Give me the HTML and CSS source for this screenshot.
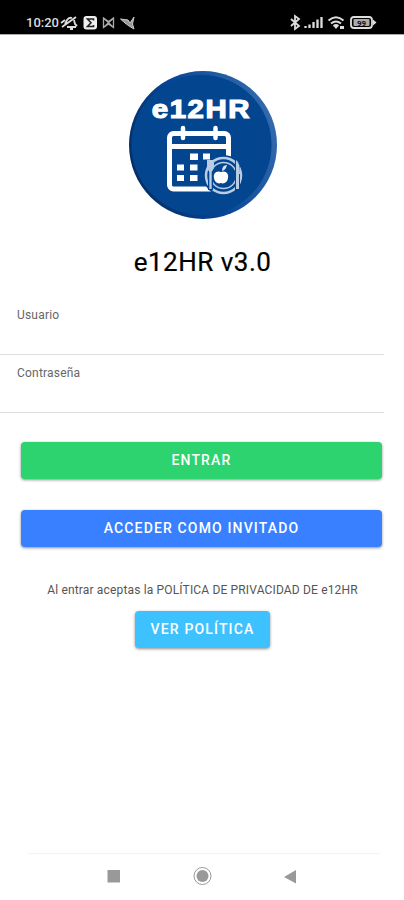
FILE: index.html
```html
<!DOCTYPE html>
<html lang="es">
	<head>
		<meta charset="utf-8">
		<meta name="viewport" content="width=device-width, initial-scale=1.0">
		<title>e12HR</title>
		<link rel="stylesheet" href="styles.css">
	</head>
	<body>
		<header class="status">
			<span class="time">10:20</span>
			<svg class="left-icons" width="76" height="18" viewBox="60 14 76 18">
				<!-- muted bell -->
				<g fill="none" stroke="#ddd" stroke-width="1.8">
					<path d="M65 24l2-4q2-3 5-2M74 20l1 4 2 2M67 27h9M70 29h3M61 23l4-3M62 27L76 17"/>
				</g>
				<rect x="83.500" y="16" width="13.500" height="13.500" rx="3" fill="#eee"/>
				<path d="M93.500 20.500v-1.500h-6l3.500 3.700-3.500 3.800h6V25" fill="none" stroke="#222" stroke-width="1.600"/>
				<path d="M103.500 18v9.500l5-3.500 5 3.500V18l-5 3.500zM103.500 18l10 9.500M113.500 18l-10 9.500" fill="none" stroke="#aaa" stroke-width="1.300"/>
				<path d="M120.500 19l7.500 1 2 3 4-6-1.500 7 1.500 5-5-3-4-3z" fill="#999" stroke="#ccc"/>
			</svg>
			<svg class="right-icons" width="88" height="18" viewBox="289 14 88 18">
				<path d="M291 19l8 7-4 3V16l4 3-8 7" fill="none" stroke="#ddd" stroke-width="1.800"/>
				<path d="M305.500 28v-2M309.500 28v-3.500M313.500 28v-6M317.500 28v-8.500M321.500 28V17" stroke="#ddd" stroke-width="2.300"/>
				<g fill="none" stroke="#ddd" stroke-width="2">
					<path d="M328.500 20.500q7.500-6.500 15 0M331 23.500q5-4 10 0M333.500 26q2.500-2 5 0"/>
				</g>
				<path d="M333.500 26l2.500 3 2.500-3zM340 26h4v3h-4z" fill="#ddd"/>
				<rect x="351" y="17" width="21" height="11" rx="3" fill="none" stroke="#ddd" stroke-width="1.800"/>
				<rect x="353.500" y="19" width="16" height="7" rx="1" fill="#aaa"/>
				<path d="M373 19.500l3.500 3-3.500 3z" fill="#ddd"/>
				<text x="361.500" y="25.500" class="battery">99</text>
			</svg>
		</header>

		<main class="login">
			<svg class="logo" width="150" height="150" viewBox="0 0 150 150">
				<defs>
					<linearGradient id="rim" x1="0" y1=".7" x2="1" y2=".3">
						<stop offset="0" stop-color="#062c62"/>
						<stop offset=".45" stop-color="#064596"/>
						<stop offset="1" stop-color="#356cad"/>
					</linearGradient>
				</defs>
				<circle cx="75" cy="75" r="74" fill="url(#rim)"/>
				<circle cx="73.500" cy="75" r="70" fill="#03458f"/>
				<text x="20.500" y="48" class="logo-text" transform="translate(1) scale(1.11 1)">e12HR</text>
				<!-- calendar -->
				<rect x="41.500" y="63.500" width="59" height="55.500" rx="4" fill="none" stroke="#fff" stroke-width="5"/>
				<path d="M42 76.500h58" stroke="#fff" stroke-width="5"/>
				<path d="M55 58v10M87.500 58v10" stroke="#fff" stroke-width="4.500" stroke-linecap="round"/>
				<path d="M62 83.500h8v6.500h-8zM75 83.500h7v6h-7zM49 94.500h7v6h-7zM62 94.500h7.500v6H62zM49 105h7v6h-7zM62 105h7.500v6H62z" fill="#fff"/>
				<!-- plate -->
				<circle cx="95.500" cy="105.500" r="20.500" fill="#03458f"/>
				<circle cx="95.500" cy="105.500" r="17.500" fill="none" stroke="#b8cce4" stroke-width="2.500"/>
				<circle cx="95.500" cy="105.500" r="13" fill="none" stroke="#b8cce4" stroke-width="1.500"/>
				<path d="M93 102c-5-2-8 2-7 6 .5 4 4 6.500 7 5 3 1.500 6.500-1 7-5 1-4-2-8-7-6z" fill="#fff"/>
				<path d="M94 101q0-6 5-6-1 5-5 6z" fill="#d8e6f5"/>
				<!-- fork and knife -->
				<path d="M82.500 90v30M109.500 90v30" stroke="#03458f" stroke-width="5"/>
				<path d="M79 90h7v8l-2.300 4v17h-2.400v-17L79 98zM108 90q4 2 4 14h-1v15h-3z" fill="#b8cce4"/>
			</svg>

			<h1>e12HR v3.0</h1>

			<form class="form">
				<label class="field"><span>Usuario</span><input type="text"></label>
				<label class="field"><span>Contraseña</span><input type="password"></label>
				<button type="button" class="btn success">ENTRAR</button>
				<button type="button" class="btn primary">ACCEDER COMO INVITADO</button>
			</form>
			<p class="policy">Al entrar aceptas la POLÍTICA DE PRIVACIDAD DE e12HR</p>
			<button type="button" class="btn info">VER POLÍTICA</button>
		</main>

		<footer class="navbar">
			<svg width="404" height="46" viewBox="0 0 404 46">
				<path d="M107.500 16h12.500v12.500h-12.500zM296 16v13.500l-12-6.500z" fill="#999"/>
				<circle cx="202.500" cy="22" r="8.500" fill="none" stroke="#999"/>
				<circle cx="202.500" cy="22" r="6" fill="#999"/>
			</svg>
		</footer>
	</body>
</html>
```

FILE: styles.css
```css
* {
	box-sizing: border-box;
}

body {
	margin: 0;
	height: 900px;
	display: flex;
	flex-direction: column;
	background: #fff;
	font-family: Roboto, sans-serif;
	color: #000;
}

.status {
	height: 34px;
	padding: 14px 27px 0 26px;
	display: flex;
	background: #000;
	box-shadow: 0 1px #aaa;
}

.time {
	width: 34px;
	font-size: 13px;
	line-height: 18px;
	font-weight: 500;
	color: #ddd;
	white-space: nowrap;
}

.right-icons {
	margin-left: auto;
}

.battery {
	font-size: 8px;
	font-weight: 700;
	text-anchor: middle;
	fill: #111;
}

.login {
	flex: 1;
	display: flex;
	flex-direction: column;
	align-items: center;
	padding-top: 36px;
}

.logo {
	margin-left: 2px;
}

.logo-text {
	font-family: "Liberation Sans", sans-serif;
	font-size: 26.5px;
	font-weight: 700;
	letter-spacing: 1.4px;
	fill: #fff;
	stroke: #fff;
	stroke-width: 1.2px;
}

h1 {
	margin: 26px 0 0 1px;
	font-size: 26px;
	line-height: 32px;
	font-weight: 400;
	letter-spacing: 0.5px;
	-webkit-text-stroke: 0.2px #000;
}

.form {
	width: 100%;
	padding: 19px 20px 0 0;
}

.field {
	display: block;
	height: 58px;
	padding: 11px 17px 0;
	border-bottom: 1px solid #ddd;
	font-size: 12px;
	line-height: 14px;
	letter-spacing: 0.2px;
	color: #666;
}

.field span {
	display: block;
}

.field input {
	display: block;
	width: 100%;
	height: 30px;
	border: 0;
	outline: 0;
	background: none;
}

.btn {
	display: block;
	height: 37px;
	padding: 0 0 2px;
	border: 0;
	border-radius: 4px;
	font: 500 14px Roboto, sans-serif;
	letter-spacing: 1.15px;
	color: #fff;
	box-shadow: 0 1px 3px rgba(0, 0, 0, 0.45);
}

.form .btn {
	width: 361px;
	margin: 31px 0 0 21px;
}

.form .success {
	margin-top: 29px;
	padding-bottom: 1px;
}

.success {
	background: #2dd36f;
}

.primary {
	background: #3880ff;
}

.policy {
	margin: 35px 0 12px 1px;
	font-size: 12px;
	line-height: 17px;
	letter-spacing: 0.16px;
	color: #555;
}

.info {
	width: 135px;
	padding-left: 1px;
	background: #3dc2ff;
}

.navbar {
	height: 47px;
}

.navbar::before {
	content: "";
	display: block;
	height: 1px;
	margin: 0 24px 0 28px;
	background: #f3f3f3;
}

.navbar svg {
	display: block;
}
```
